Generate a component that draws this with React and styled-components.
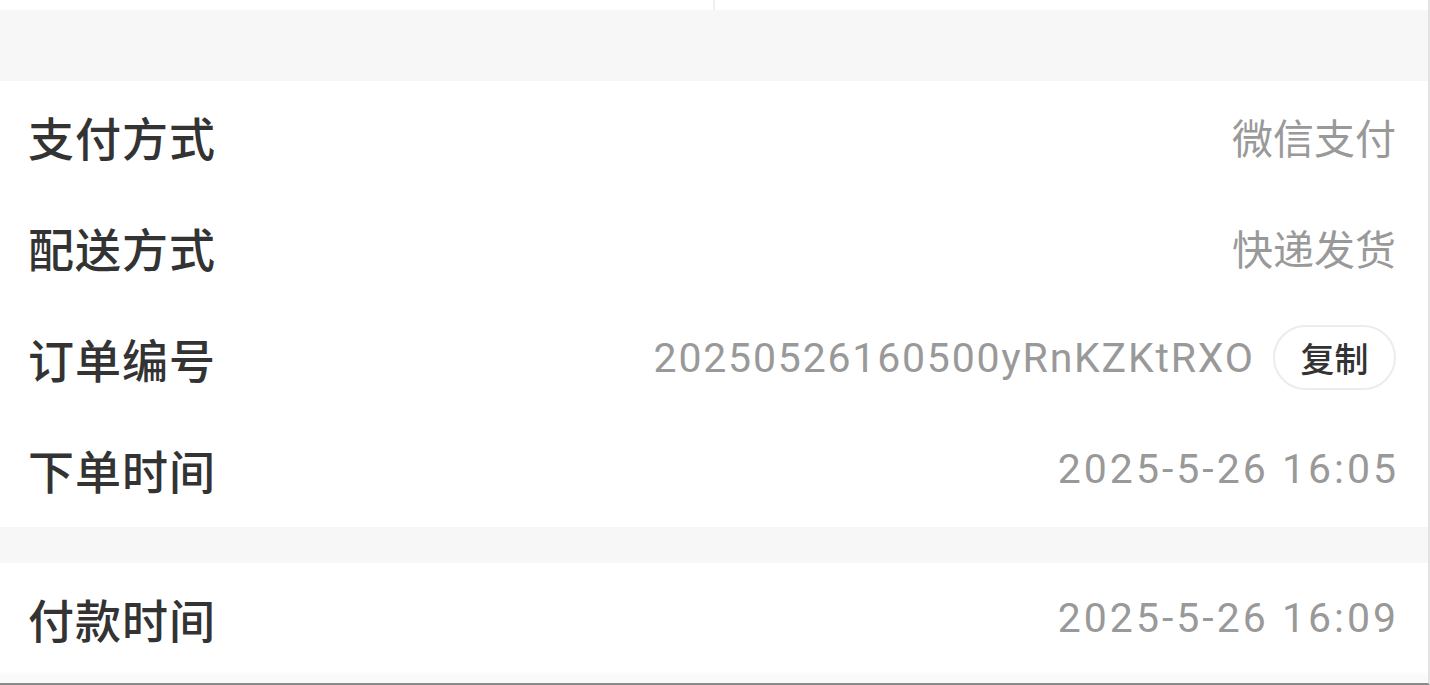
import React from "react";
import styled, { createGlobalStyle } from "styled-components";

const GlobalStyle = createGlobalStyle`
  html, body {
    margin: 0;
    padding: 0;
    background: #ffffff;
  }
  body {
    font-family: Roboto, "Noto Sans CJK SC", sans-serif;
  }
`;

const Page = styled.div`
  width: 1430px;
  height: 685px;
  box-sizing: border-box;
  display: flex;
  flex-direction: column;
  background: #f7f7f7;
  border-right: 2px solid #e2e2e2;
  border-bottom: 2px solid #8a8a8a;
  overflow: hidden;
`;

const TopBar = styled.div`
  height: 10px;
  display: flex;
  background: #ffffff;
`;

const TopHalf = styled.div`
  flex: 1;
  & + & {
    border-left: 2px solid #f0f0f0;
  }
`;

const Gap = styled.div`
  height: ${(p) => p.h}px;
  flex-shrink: 0;
  background: #f7f7f7;
`;

const Section = styled.div`
  background: #ffffff;
  padding-bottom: 2px;
  display: flex;
  flex-direction: column;
  flex: ${(p) => (p.grow ? 1 : "none")};
  ${(p) => p.grow && "background: linear-gradient(#fff 0, #fff 108px, #fafafa 112px);"}
`;

const Row = styled.div`
  height: 111px;
  box-sizing: border-box;
  display: flex;
  align-items: center;
  justify-content: space-between;
  padding: 0 32px 2px 28px;
`;

const Label = styled.span`
  font-family: "Noto Sans CJK SC", sans-serif;
  font-size: 46px;
  font-weight: 500;
  color: #333333;
  letter-spacing: 1px;
`;

const Value = styled.span`
  display: flex;
  align-items: center;
  gap: 20px;
  font-family: Roboto, "Noto Sans CJK SC", sans-serif;
  font-size: 41px;
  color: #999999;
  letter-spacing: ${(p) => p.spacing || 0}px;
  margin-right: ${(p) => (p.spacing ? -p.spacing : 0)}px;
`;

const CopyBtn = styled.span`
  display: inline-flex;
  align-items: center;
  justify-content: center;
  width: 123px;
  height: 65px;
  box-sizing: border-box;
  border: 2px solid #ececec;
  border-radius: 33px;
  font-family: "Noto Sans CJK SC", sans-serif;
  font-size: 34px;
  font-weight: 500;
  color: #333333;
  letter-spacing: 0;
`;

const rows = [
  { label: "支付方式", value: "微信支付" },
  { label: "配送方式", value: "快递发货" },
  { label: "订单编号", value: "20250526160500yRnKZKtRXO", copy: true, spacing: 1.8 },
  { label: "下单时间", value: "2025-5-26 16:05", spacing: 3 },
];

export default function App() {
  return (
    <>
      <GlobalStyle />
      <Page>
        <TopBar>
          <TopHalf />
          <TopHalf />
        </TopBar>
        <Gap h={71} />
        <Section>
          {rows.map((r) => (
            <Row key={r.label}>
              <Label>{r.label}</Label>
              <Value spacing={r.copy ? 0 : r.spacing}>
                {r.copy ? (
                  <Value spacing={r.spacing}>{r.value}</Value>
                ) : (
                  r.value
                )}
                {r.copy && <CopyBtn>复制</CopyBtn>}
              </Value>
            </Row>
          ))}
        </Section>
        <Gap h={36} />
        <Section grow>
          <Row>
            <Label>付款时间</Label>
            <Value spacing={3}>2025-5-26 16:09</Value>
          </Row>
        </Section>
      </Page>
    </>
  );
}
